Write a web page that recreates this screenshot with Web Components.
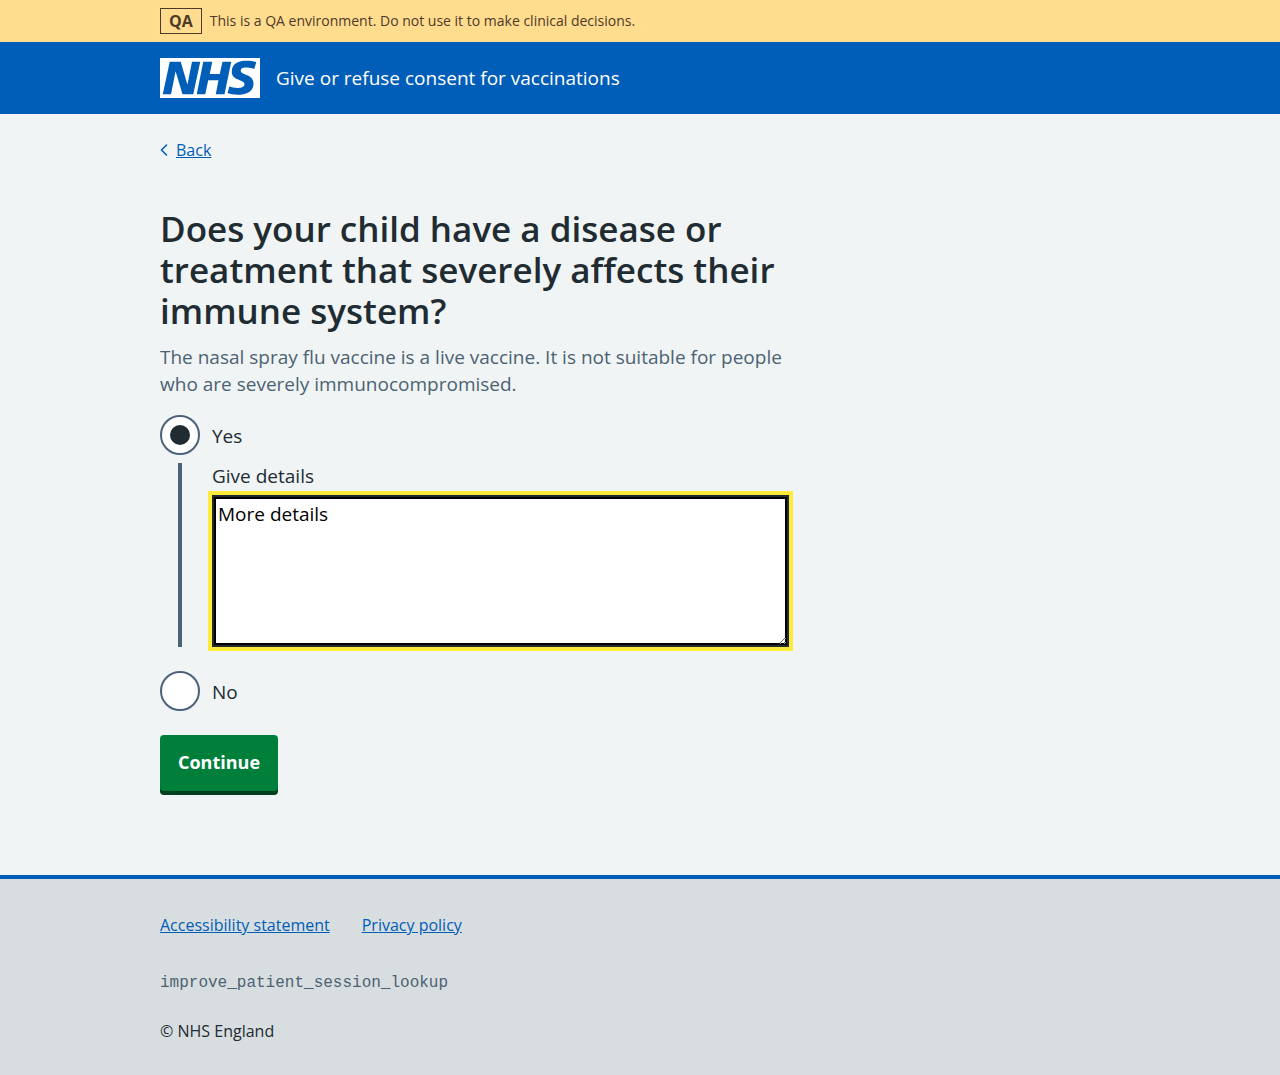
<!DOCTYPE html>
<html lang="en">
<head>
<meta charset="utf-8">
<meta name="viewport" content="width=device-width, initial-scale=1">
<title>Give or refuse consent for vaccinations</title>
<style>
  :root {
    --blue: #005eb8;
    --ink: #212b32;
    --grey: #4c6272;
    --rule: #4c6278;
    --page: #f0f4f5;
  }
  html { background: #d8dde0; }
  body {
    margin: 0;
    font: 19px/27px "Open Sans", "Noto Sans", sans-serif;
    color: var(--ink);
  }
</style>
</head>
<body>
<consent-page>
  <environment-banner slot="banner" tag="QA">This is a QA environment. Do not use it to make clinical decisions.</environment-banner>
  <site-header slot="header">Give or refuse consent for vaccinations</site-header>
  <back-link slot="back">Back</back-link>
  <yes-no-question>
    <span slot="title">Does your child have a disease or treatment that severely affects their immune system?</span>
    <span slot="hint">The nasal spray flu vaccine is a live vaccine. It is not suitable for people who are severely immunocompromised.</span>
    <details-field slot="conditional" value="More details">Give details</details-field>
  </yes-no-question>
  <action-button>Continue</action-button>
  <site-footer slot="footer">
    <footer-link slot="links" href="#accessibility">Accessibility statement</footer-link>
    <footer-link slot="links" href="#privacy">Privacy policy</footer-link>
    <span slot="release">improve_patient_session_lookup</span>
    <span slot="copyright">© NHS England</span>
  </site-footer>
</consent-page>

<script>
const container = `
  .container { box-sizing: border-box; max-width: 1024px; margin: 0 auto; padding-left: 32px; padding-right: 32px; }
`;

function define(name, html, setup) {
  const template = document.createElement('template');
  template.innerHTML = html;
  customElements.define(name, class extends HTMLElement {
    constructor() {
      super();
      this.attachShadow({ mode: 'open' }).append(template.content.cloneNode(true));
    }
    connectedCallback() {
      if (setup) setup(this, this.shadowRoot);
    }
  });
}

define('consent-page', `
  <style>
    ${container}
    :host { display: block; background: var(--page); }
    .container { padding-top: 24px; padding-bottom: 80px; }
    main { display: flex; flex-direction: column; align-items: flex-start; gap: 24px; padding-top: 46px; }
    ::slotted(yes-no-question) { width: 629px; max-width: 100%; }
  </style>
  <slot name="banner"></slot>
  <slot name="header"></slot>
  <div class="container">
    <slot name="back"></slot>
    <main><slot></slot></main>
  </div>
  <slot name="footer"></slot>
`);

define('environment-banner', `
  <style>
    ${container}
    :host { display: block; background: #ffdc8e; color: #4d3a2a; font-size: 14px; line-height: 24px; }
    .container { display: flex; align-items: center; gap: 8px; padding-top: 8px; padding-bottom: 8px; }
    strong { border: 1px solid currentColor; padding: 0 8px; font-size: 16px; font-weight: 700; }
  </style>
  <div class="container"><strong></strong><span><slot></slot></span></div>
`, (host, root) => {
  root.querySelector('strong').textContent = host.getAttribute('tag');
});

define('site-header', `
  <style>
    ${container}
    :host { display: block; background: var(--blue); color: #fff; }
    .container { display: flex; align-items: center; padding-top: 16px; padding-bottom: 16px; }
    a { display: flex; align-items: center; gap: 16px; color: inherit; text-decoration: none; }
    svg { display: block; width: 100px; height: 40px; flex: none; }
  </style>
  <header><div class="container">
    <a href="#home">
      <svg viewBox="0 0 40 16" role="img" aria-label="NHS">
        <path fill="#fff" d="M0 0h40v16H0z"/>
        <path fill="#005eb8" d="M3.9 1.5h4.4l2.6 9h.1l1.8-9h3.3l-2.8 13H9l-2.7-9h-.1l-1.8 9H1.1M17.3 1.5h3.6l-1 4.9h4L25 1.5h3.5l-2.7 13h-3.5l1.1-5.6h-4.1l-1.2 5.6h-3.4M37.7 4.4c-.7-.3-1.6-.6-2.9-.6-1.4 0-2.5.2-2.5 1.3 0 1.8 5.1 1.2 5.1 5.1 0 3.6-3.3 4.5-6.4 4.5-1.3 0-2.9-.3-4-.7l.8-2.7c.7.4 2.1.7 3.2.7s2.8-.2 2.8-1.5c0-2.1-5.1-1.3-5.1-5 0-3.4 2.9-4.4 5.8-4.4 1.6 0 3.1.2 4 .6"/>
      </svg>
      <span><slot></slot></span>
    </a>
  </div></header>
`);

define('back-link', `
  <style>
    :host { display: block; font-size: 16px; line-height: 24px; }
    a { display: inline-flex; align-items: center; gap: 8px; color: var(--blue); text-decoration: none; }
    span { text-decoration: underline; }
    svg { display: block; width: 8px; height: 12px; }
  </style>
  <a href="#back">
    <svg viewBox="0 0 8 12" aria-hidden="true"><path d="M6.5 1 1.5 6l5 5" fill="none" stroke="currentColor" stroke-width="1.6" stroke-linecap="round" stroke-linejoin="round"/></svg>
    <span><slot></slot></span>
  </a>
`);

define('yes-no-question', `
  <style>
    :host { display: block; }
    fieldset { border: 0; margin: 0; padding: 0; min-width: 0; }
    legend { padding: 0; margin-bottom: 13px; }
    h1 { margin: 0; font-size: 35px; line-height: 41px; font-weight: 600; }
    .hint { color: var(--grey); margin-bottom: 17px; }
    .choice { display: flex; align-items: center; gap: 12px; }
    .choice label { padding-top: 2px; }
    input {
      appearance: none; flex: none; display: grid; place-content: center;
      box-sizing: border-box; width: 40px; height: 40px; margin: 0;
      border: 2px solid var(--rule); border-radius: 50%; background: #fff;
    }
    input:checked::before { content: ""; width: 20px; height: 20px; border-radius: 50%; background: var(--ink); }
    .conditional { margin: 8px 0 24px 18px; padding-left: 30px; border-left: 4px solid var(--rule); }
  </style>
  <fieldset aria-describedby="hint">
    <legend><h1><slot name="title"></slot></h1></legend>
    <div class="hint" id="hint"><slot name="hint"></slot></div>
    <div class="choice"><input type="radio" name="answer" id="yes" value="yes" checked><label for="yes">Yes</label></div>
    <div class="conditional"><slot name="conditional"></slot></div>
    <div class="choice"><input type="radio" name="answer" id="no" value="no"><label for="no">No</label></div>
  </fieldset>
`);

define('details-field', `
  <style>
    :host { display: block; }
    label { display: block; margin-bottom: 5px; }
    textarea {
      display: block; box-sizing: border-box; width: 100%; height: 152px; margin: 0; padding: 4px;
      font: inherit; color: #000; background: #fff; resize: vertical;
      border: 2px solid var(--ink); border-radius: 0;
      outline: 4px solid #ffeb3b; box-shadow: inset 0 0 0 2px #000;
    }
  </style>
  <label for="details"><slot></slot></label>
  <textarea id="details"></textarea>
`, (host, root) => {
  root.querySelector('textarea').value = host.getAttribute('value');
});

define('action-button', `
  <style>
    :host { display: block; }
    button {
      display: block; margin: 0 0 4px; padding: 14px 18px 15px; border: 0; border-radius: 4px;
      background: #007f3b; box-shadow: 0 4px 0 #00401e; color: #fff;
      font: inherit; font-size: 18px; font-weight: 700; cursor: pointer;
    }
  </style>
  <button type="submit"><slot></slot></button>
`);

define('footer-link', `
  <style>
    :host { display: block; }
    a { color: var(--blue); }
  </style>
  <a><slot></slot></a>
`, (host, root) => {
  root.querySelector('a').href = host.getAttribute('href');
});

define('site-footer', `
  <style>
    ${container}
    :host { display: block; background: #d8dde0; border-top: 4px solid var(--blue); font-size: 16px; line-height: 24px; }
    .container { display: flex; flex-direction: column; gap: 34px; padding-top: 34px; padding-bottom: 32px; }
    nav { display: flex; flex-wrap: wrap; gap: 8px 32px; }
    .meta { display: flex; flex-direction: column; gap: 24px; }
    code { font-family: "Liberation Mono", monospace; color: var(--grey); }
  </style>
  <footer><div class="container">
    <nav><slot name="links"></slot></nav>
    <div class="meta">
      <code><slot name="release"></slot></code>
      <div><slot name="copyright"></slot></div>
    </div>
  </div></footer>
`);
</script>
</body>
</html>
